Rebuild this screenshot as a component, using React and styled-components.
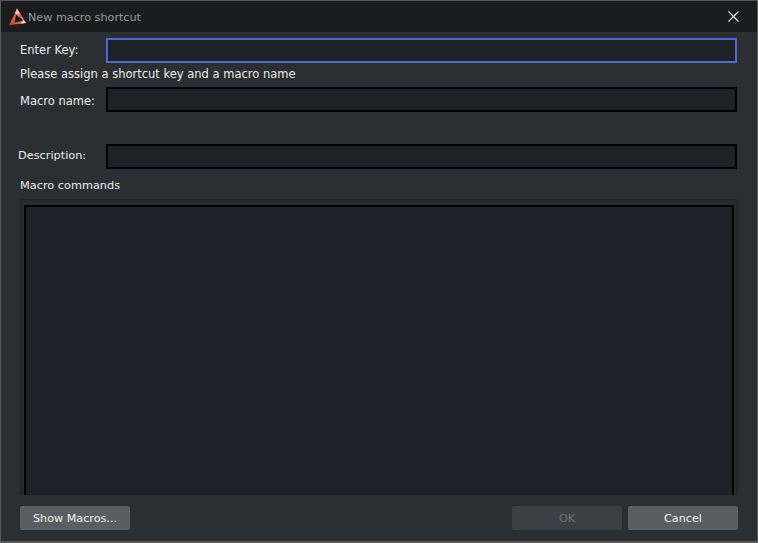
import React from 'react';
import styled, { createGlobalStyle } from 'styled-components';

const Global = createGlobalStyle`
  html, body { margin: 0; padding: 0; background: #2b2f32; }
`;

const Dialog = styled.div`
  box-sizing: border-box;
  width: 758px;
  height: 543px;
  display: flex;
  flex-direction: column;
  border: 1px solid #585858;
  border-width: 1px 1px 2px 1px;
  background: #2b2f32;
  color: #ececec;
  font-family: "DejaVu Sans", sans-serif;
  font-size: 11.5px;
`;

const TitleBar = styled.div`
  height: 31px;
  flex: none;
  display: flex;
  align-items: center;
  padding: 0 18px 0 8px;
  background: #1b1c1e;
`;

const Title = styled.span`
  margin-left: 1px;
  padding-top: 1px;
  flex: 1;
  font-size: 11.2px;
  color: #9a9a9a;
`;

const Body = styled.div`
  flex: 1;
  min-height: 0;
  display: flex;
  flex-direction: column;
  padding: 6px 19px 11px 19px;
`;

const Row = styled.div`
  display: flex;
  align-items: center;
  height: 25px;
  margin-top: ${p => p.$top || 0}px;
`;

const Label = styled.label`
  width: 86px;
  flex: none;
  font-size: ${p => p.$size || 11.5}px;
  padding-top: ${p => p.$down || 0}px;
  padding-bottom: ${p => p.$up || 0}px;
  margin-left: ${p => p.$shift || 0}px;
  margin-right: ${p => -(p.$shift || 0)}px;
`;

const Field = styled.input`
  box-sizing: border-box;
  flex: 1;
  min-width: 0;
  height: 25px;
  margin-right: 1px;
  background: #1e2125;
  border: 2px solid ${p => (p.$focused ? '#4d68d8' : '#000')};
  outline: none;
`;

const Hint = styled.div`
  height: 24px;
  line-height: 23px;
`;

const Caption = styled.div`
  height: 30px;
  font-size: 11.3px;
  line-height: 34px;
`;

const CommandsFrame = styled.div`
  flex: 1;
  min-height: 0;
  box-sizing: border-box;
  background: #292c2f;
  border: 2px solid #25282b;
  border-bottom: none;
  padding: 4px 2px 0 2px;
  display: flex;
`;

const CommandsText = styled.div`
  flex: 1;
  background: #1e2125;
  border: 2px solid #000;
  border-bottom: none;
`;

const Footer = styled.div`
  display: flex;
  align-items: center;
  gap: 6px;
  margin-top: 11px;
`;

const Button = styled.button`
  width: 110px;
  height: 24px;
  padding: 0;
  border: none;
  border-radius: 2px;
  background: ${p => (p.disabled ? '#3d4042' : '#5a5e61')};
  color: ${p => (p.disabled ? '#6e7072' : '#f0f0f0')};
  font: inherit;
  font-size: 11.2px;
  margin-left: ${p => (p.$push ? 'auto' : 0)};
`;

const Logo = () => (
  <svg width="18" height="18" viewBox="0 0 18 18">
    <path d="M8 0.5 L0.5 17 L17 15 L13 8 Z" fill="#d9643f" />
    <path d="M8 0.5 L6 5 L9 7 L11 5.5 Z" fill="#f2c4ae" />
    <path d="M3 11 L0.5 17 L5 16 L4.5 11 Z" fill="#c4502e" />
    <path d="M12 9 L17 15 L11 15.8 L14 13 Z" fill="#f0d8cc" />
    <path d="M7 7 L14.5 12.3 L5.5 14.8 Z" fill="#17181a" />
  </svg>
);

const CloseIcon = () => (
  <svg width="11" height="11" viewBox="0 0 11 11">
    <path d="M0.5 0.5 L10.5 10.5 M10.5 0.5 L0.5 10.5" stroke="#f2f2f2" strokeWidth="1.2" fill="none" />
  </svg>
);

export default function App() {
  return (
    <>
      <Global />
      <Dialog>
        <TitleBar>
          <Logo />
          <Title>New macro shortcut</Title>
          <CloseIcon />
        </TitleBar>
        <Body>
          <Row>
            <Label $up={1}>Enter Key:</Label>
            <Field $focused />
          </Row>
          <Hint>Please assign a shortcut key and a macro name</Hint>
          <Row>
            <Label $down={3}>Macro name:</Label>
            <Field />
          </Row>
          <Row $top={32}>
            <Label $shift={-2} $up={3} $size={11.3}>Description:</Label>
            <Field />
          </Row>
          <Caption>Macro commands</Caption>
          <CommandsFrame>
            <CommandsText />
          </CommandsFrame>
          <Footer>
            <Button>Show Macros...</Button>
            <Button $push disabled>OK</Button>
            <Button>Cancel</Button>
          </Footer>
        </Body>
      </Dialog>
    </>
  );
}
